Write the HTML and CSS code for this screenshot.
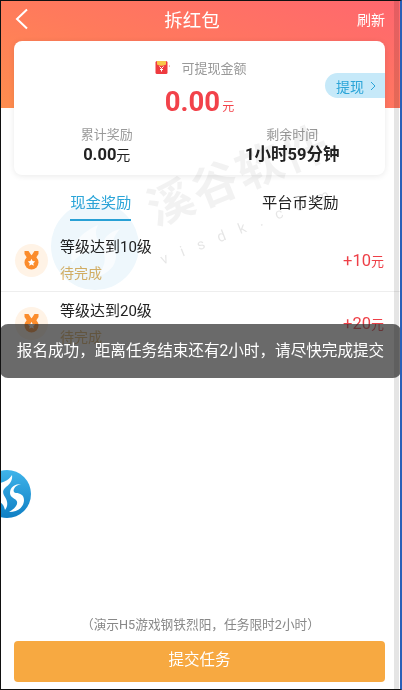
FILE: index.html
```html
<!DOCTYPE html>
<html lang="zh-CN">
<head>
    <meta charset="UTF-8">
    <meta name="viewport" content="width=device-width, initial-scale=1.0">
    <title>拆红包</title>
    <link rel="stylesheet" href="styles.css">
</head>
<body>
    <div class="screen">
        <div class="hero">
            <div class="nav">
                <svg class="nav-back" width="14" height="22" viewBox="0 0 14 22">
                    <polyline points="12,1.5 2,11 12,20.5" fill="none" stroke="#fff" stroke-width="2"/>
                </svg>
                <div class="nav-title">拆红包</div>
                <div class="nav-action">刷新</div>
            </div>
        </div>

        <div class="card">
            <div class="balance-label">
                <svg width="15" height="15" viewBox="0 0 15 15">
                    <rect x="0.5" y="1" width="12" height="13" rx="1.5" fill="#ee3a3f"/>
                    <path d="M2 1h9v3.5q-4.5 2.5-9 0z" fill="#f8c64a"/>
                    <path d="M4.5 6.5l2 2 2-2M6.5 8.5v3M5 9.5h3" fill="none" stroke="#fff" stroke-width="1"/>
                    <circle cx="14.4" cy="6" r="0.5" fill="#ee3a3f"/>
                </svg>
                <span>可提现金额</span>
            </div>
            <div class="balance-amount">0.00<small>元</small></div>
            <div class="withdraw">提现
                <svg width="6" height="10" viewBox="0 0 6 10">
                    <polyline points="1,1 5,5 1,9" fill="none" stroke="#2ba5d8" stroke-width="1"/>
                </svg>
            </div>
            <div class="stats">
                <div class="stat">
                    <div class="stat-label">累计奖励</div>
                    <div class="stat-value">0.00<small>元</small></div>
                </div>
                <div class="stat">
                    <div class="stat-label">剩余时间</div>
                    <div class="stat-value">1小时59分钟</div>
                </div>
            </div>
        </div>

        <div class="tabs">
            <div class="tab tab-active"><span>现金奖励</span></div>
            <div class="tab"><span>平台币奖励</span></div>
        </div>

        <div class="list">
            <div class="task">
                <div class="task-icon">
                    <svg width="15" height="19" viewBox="0 0 15 19">
                        <path d="M0.5 0h4l3 4.5 3-4.5h4v3l-3 4.5h-8l-3-4.500z" fill="#fb8c2c"/>
                        <circle cx="7.500" cy="11.500" r="7" fill="#fb8c2c"/>
                        <path d="M7.500 7.700l1.100 2.400 2.600.3-1.900 1.800.5 2.600-2.300-1.300-2.300 1.300.5-2.600-1.900-1.800 2.600-.3z" fill="#fff"/>
                    </svg>
                </div>
                <div class="task-info">
                    <div class="task-name">等级达到10级</div>
                    <div class="task-status">待完成</div>
                </div>
                <div class="task-reward">+10<small>元</small></div>
            </div>
            <div class="task">
                <div class="task-icon">
                    <svg width="15" height="19" viewBox="0 0 15 19">
                        <path d="M0.5 0h4l3 4.5 3-4.5h4v3l-3 4.5h-8l-3-4.500z" fill="#fb8c2c"/>
                        <circle cx="7.500" cy="11.500" r="7" fill="#fb8c2c"/>
                        <path d="M7.500 7.700l1.100 2.400 2.600.3-1.900 1.800.5 2.600-2.300-1.300-2.300 1.300.5-2.600-1.900-1.800 2.600-.3z" fill="#fff"/>
                    </svg>
                </div>
                <div class="task-info">
                    <div class="task-name">等级达到20级</div>
                    <div class="task-status">待完成</div>
                </div>
                <div class="task-reward">+20<small>元</small></div>
            </div>
        </div>

        <div class="note">（演示H5游戏钢铁烈阳，任务限时2小时）</div>
        <div class="submit">提交任务</div>

        <!-- watermark over the page -->
        <div class="watermark">
            <svg class="wm-logo" width="90" height="90" viewBox="0 0 90 90">
                <circle cx="45" cy="45" r="44" fill="#eef7fc"/>
                <path d="M22 62C18 46 30 32 48 24c-6 12 2 18 10 24-8-3-24 0-36 14zM46 76c16-4 24-16 18-30-2-6 0-12 6-18-14 4-20 12-16 24 2 8 0 16-8 24z" fill="#f9fcfe"/>
            </svg>
            <div class="wm-name">溪谷软件</div>
            <div class="wm-site">visdk.com</div>
        </div>

        <svg class="float-logo" width="31" height="50" viewBox="0 0 31 50">
            <defs>
                <linearGradient id="floatBlue" x1="0" y1="0" x2="0" y2="1">
                    <stop offset="0" stop-color="#3fb4ea"/>
                    <stop offset="1" stop-color="#0f7fc4"/>
                </linearGradient>
            </defs>
            <circle cx="7" cy="25" r="24" fill="url(#floatBlue)"/>
            <path d="M0 14c4-1 9-3 12-8 1 6-3 10-7 13-3 3-2 6 0 9 3 5 3 9 0 13-1-4-2-6-5-8z" fill="#fff"/>
            <path d="M9 43c9 0 15-5 15-12 0-5-4-7-8-7-2 0-3-2-2-4 1-3 4-4 7-5-6 0-11 3-11 9 0 4 4 5 6 7 3 3 0 8-7 12z" fill="#fff"/>
        </svg>

        <div class="toast">报名成功，距离任务结束还有2小时，请尽快完成提交</div>
        <div class="edge"></div>
    </div>
</body>
</html>
```

FILE: styles.css
```css
* {
    box-sizing: border-box;
}

body {
    margin: 0;
    font-family: Roboto, 'Noto Sans CJK SC', sans-serif;
    background: #fff;
}

small {
    font-weight: 400;
}

.screen {
    position: relative;
    width: 402px;
    height: 690px;
    overflow: hidden;
    display: flex;
    flex-direction: column;
    background: #fff;
    border-top: 1px solid #111;
    border-left: 1px solid #111;
    border-bottom: 1px solid #111;
    border-right: 2px solid #2a5fb8;
}

.hero {
    flex: none;
    height: 107px;
    background: linear-gradient(200deg, #ff676f 0%, #ff7a5c 55%, #ff8d4e 100%);
}

.nav {
    display: flex;
    align-items: center;
    justify-content: space-between;
    height: 36px;
    padding: 0 15px 0 14px;
    color: #fff;
}

.nav-title {
    font-size: 18.5px;
    margin-right: 2px;
}

.nav-action {
    font-size: 14px;
}

/* balance card */
.card {
    position: relative;
    flex: none;
    height: 134px;
    margin: -67px 15px 0 13px;
    padding-top: 16px;
    background: #fff;
    border-radius: 8px;
    box-shadow: 0 1px 6px rgba(0, 0, 0, 0.09);
    text-align: center;
}

.balance-label {
    display: flex;
    align-items: center;
    justify-content: center;
    gap: 11px;
    height: 20px;
    padding-left: 3px;
    font-size: 13px;
    color: #999;
}

.balance-amount {
    margin-top: 5px;
    height: 40px;
    line-height: 40px;
    font-size: 27.5px;
    font-weight: 700;
    color: #f2424a;
}

.balance-amount small {
    margin-left: 2px;
    font-size: 12px;
}

.withdraw {
    position: absolute;
    top: 32px;
    right: 0;
    display: flex;
    align-items: center;
    gap: 6px;
    width: 60px;
    height: 25px;
    padding-left: 11px;
    border-radius: 13px 0 0 13px;
    background: #c6e9f9;
    color: #2ba5d8;
    font-size: 14px;
}

.stats {
    display: flex;
    margin-top: 3px;
}

.stat {
    flex: 1;
}

.stat-label {
    height: 20px;
    line-height: 20px;
    font-size: 13px;
    color: #999;
}

.stat-value {
    height: 20px;
    line-height: 20px;
    font-size: 16.5px;
    font-weight: 700;
    color: #222;
}

.stat-value small {
    font-size: 14px;
}

/* tabs */
.tabs {
    flex: none;
    display: flex;
    height: 31px;
    margin-top: 15px;
}

.tab {
    flex: 1;
    text-align: center;
    font-size: 15.3px;
    color: #222;
}

.tab span {
    display: inline-block;
    height: 31px;
    line-height: 26px;
}

.tab-active span {
    color: #2ba5d8;
    border-bottom: 2px solid #2ba5d8;
}

/* task rows */
.list {
    flex: 1;
    margin-top: 8px;
}

.task {
    display: flex;
    align-items: center;
    height: 63px;
    padding: 0 16px 0 14px;
    border-bottom: 1px solid #eee;
}

.task:last-child {
    border-bottom: 0;
}

.task-icon {
    flex: none;
    display: flex;
    align-items: center;
    justify-content: center;
    width: 33px;
    height: 33px;
    margin-right: 12px;
    border-radius: 50%;
    background: #fff3e6;
}

.task-info {
    flex: 1;
}

.task-name {
    height: 27px;
    line-height: 27px;
    font-size: 15px;
    color: #222;
}

.task-status {
    height: 25px;
    line-height: 25px;
    font-size: 14px;
    color: #e0b264;
}

.task-reward {
    font-size: 16.5px;
    color: #ee3f47;
}

.task-reward small {
    font-size: 13px;
}

.note {
    flex: none;
    height: 20px;
    line-height: 20px;
    text-align: center;
    font-size: 12.7px;
    color: #888;
}

.submit {
    flex: none;
    height: 41px;
    line-height: 38px;
    margin: 6px 15px 7px 13px;
    border-radius: 4px;
    background: #f7a941;
    color: #fff;
    text-align: center;
    font-size: 15.5px;
}

/* things lying on top of the page */
.watermark {
    position: absolute;
    top: 0;
    left: 0;
    width: 100%;
    height: 100%;
    pointer-events: none;
    mix-blend-mode: multiply;
}

.wm-logo {
    position: absolute;
    left: 49px;
    top: 200px;
}

.wm-name {
    position: absolute;
    left: 140px;
    top: 138px;
    transform: rotate(-22deg);
    font-size: 46px;
    font-weight: 700;
    letter-spacing: 2px;
    white-space: nowrap;
    color: rgba(0, 0, 0, 0.05);
}

.wm-site {
    position: absolute;
    left: 160px;
    top: 250px;
    transform: rotate(-21.5deg);
    transform-origin: left center;
    font-size: 15px;
    letter-spacing: 14px;
    white-space: nowrap;
    color: rgba(0, 0, 0, 0.1);
}

.float-logo {
    position: absolute;
    left: -1px;
    top: 468px;
}

.toast {
    position: absolute;
    left: -1px;
    right: -1px;
    top: 323px;
    height: 54px;
    line-height: 54px;
    border-radius: 8px;
    background: rgba(48, 48, 48, 0.72);
    color: #fff;
    text-align: center;
    font-size: 15.6px;
    white-space: nowrap;
}

.edge {
    position: absolute;
    top: 0;
    bottom: 0;
    right: 1px;
    width: 5px;
    background: rgba(0, 0, 0, 0.1);
}
```
